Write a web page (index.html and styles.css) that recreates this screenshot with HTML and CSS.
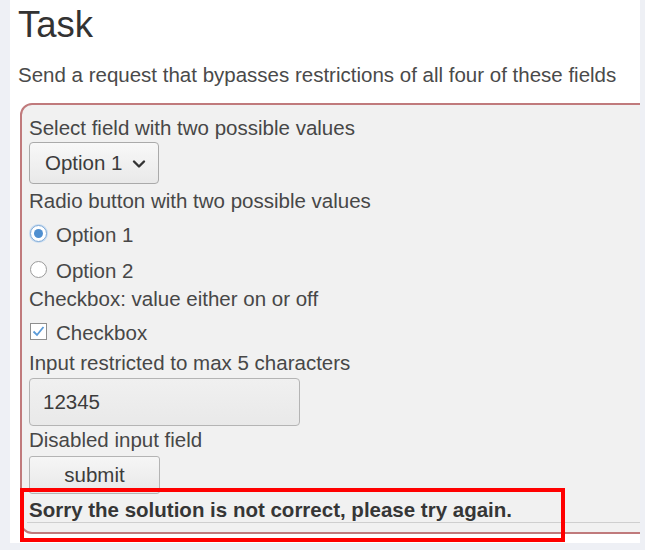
FILE: index.html
```html
<!DOCTYPE html>
<html>
<head>
<meta charset="utf-8">
<link rel="stylesheet" href="styles.css">
</head>
<body>
<div class="card">
  <h1 class="title">Task</h1>
  <p class="subtitle">Send a request that bypasses restrictions of all four of these fields</p>
  <div class="box">
    <div class="label">Select field with two possible values</div>
    <div class="select">
      <span>Option 1</span>
      <svg class="chev" width="14" height="10" viewBox="0 0 14 10"><path d="M2 2.5 L7 7.5 L12 2.5" fill="none" stroke="#333" stroke-width="2.4" stroke-linecap="round" stroke-linejoin="round"/></svg>
    </div>
    <div class="label l2">Radio button with two possible values</div>
    <div class="choice r1">
      <span class="radio on"><span class="dot"></span></span>
      <span>Option 1</span>
    </div>
    <div class="choice">
      <span class="radio"></span>
      <span>Option 2</span>
    </div>
    <div class="label l3">Checkbox: value either on or off</div>
    <div class="choice c2">
      <span class="check">
        <svg width="15" height="15" viewBox="0 0 15 15"><path d="M2.5 7.5 L6 11 L12.5 3" fill="none" stroke="#5b9bd8" stroke-width="1.8"/></svg>
      </span>
      <span>Checkbox</span>
    </div>
    <div class="label">Input restricted to max 5 characters</div>
    <div class="input">12345</div>
    <div class="label l5">Disabled input field</div>
    <div class="button">submit</div>
    <div class="message">Sorry the solution is not correct, please try again.</div>
  </div>
</div>
<div class="highlight"></div>
</body>
</html>
```

FILE: styles.css
```css
html, body {
  margin: 0;
  padding: 0;
}
body {
  background: #eef0f5;
  width: 645px;
  height: 550px;
  overflow: hidden;
  position: relative;
  font-family: "Liberation Sans", Arial, sans-serif;
  color: #474747;
}
.card {
  margin-left: 10px;
  width: 630px;
  height: 543px;
  background: #ffffff;
  overflow: hidden;
  padding-left: 8px;
  box-sizing: border-box;
  padding-top: 1px;
}
.title {
  margin: 0;
  font-weight: normal;
  font-size: 36.5px;
  line-height: 40px;
  margin-top: 4px;
  color: #333;
}
.subtitle {
  margin: 0;
  margin-top: 18px;
  font-size: 20.5px;
  line-height: 24px;
  color: #4a4a4a;
}
.box {
  margin-top: 16px;
  margin-left: 2px;
  width: 660px;
  height: 431px;
  box-sizing: border-box;
  border: 2px solid #c07a7c;
  border-radius: 12px;
  background: #f1f1f1;
  padding: 11px 0 0 7px;
  display: flex;
  flex-direction: column;
  align-items: flex-start;
  font-size: 20.5px;
}
.label {
  line-height: 24px;
}
.select {
  margin-top: 2px;
  width: 130px;
  height: 42px;
  box-sizing: border-box;
  border: 1px solid #aaaaaa;
  border-radius: 4px;
  background: linear-gradient(#f8f8f8, #e9e9e9);
  display: flex;
  align-items: center;
  padding-left: 15px;
  gap: 9px;
  color: #3c3c3c;
}
.chev {
  margin-top: 1px;
}
.l2 { margin-top: 5px; }
.choice {
  height: 36px;
  display: flex;
  align-items: center;
  gap: 9px;
  padding-left: 1px;
}
.r1 { margin-top: 4px; }
.radio {
  width: 17px;
  height: 17px;
  box-sizing: border-box;
  border-radius: 50%;
  border: 1px solid #9a9a9a;
  background: #fff;
  display: flex;
  align-items: center;
  justify-content: center;
  margin-top: -4px;
}
.radio.on {
  border-color: #7ea9d6;
  box-shadow: 0 0 0 1px #c9dcf0;
}
.dot {
  width: 9px;
  height: 9px;
  border-radius: 50%;
  background: #4f8fd0;
}
.l3 { margin-top: -2px; }
.c2 { margin-top: 4px; }
.check {
  width: 17px;
  height: 17px;
  box-sizing: border-box;
  border: 1px solid #8e8e8e;
  background: #fff;
  display: flex;
  align-items: center;
  justify-content: center;
  margin-top: -4px;
}
.check svg { display: block; }
.input {
  margin-top: 3px;
  width: 271px;
  height: 48px;
  box-sizing: border-box;
  border: 1px solid #b4b4b4;
  border-radius: 4px;
  background: linear-gradient(#f0f0f0, #e9e9e9);
  padding-left: 13px;
  display: flex;
  align-items: center;
  color: #3c3c3c;
}
.l5 { margin-top: 2px; }
.button {
  margin-top: 4px;
  width: 131px;
  height: 38px;
  box-sizing: border-box;
  border: 1px solid #b4b4b4;
  border-radius: 3px;
  background: linear-gradient(#f6f6f6, #e8e8e8);
  display: flex;
  align-items: center;
  justify-content: center;
  color: #3c3c3c;
}
.message {
  margin-top: 2px;
  margin-left: -2px;
  padding-left: 2px;
  width: 640px;
  height: 27px;
  box-sizing: border-box;
  border-bottom: 1px solid #cfcfcf;
  font-weight: bold;
  line-height: 28px;
  color: #363636;
}
.highlight {
  position: absolute;
  left: 20px;
  top: 488px;
  width: 545px;
  height: 54px;
  box-sizing: border-box;
  border: 4px solid #ff0000;
}
```
